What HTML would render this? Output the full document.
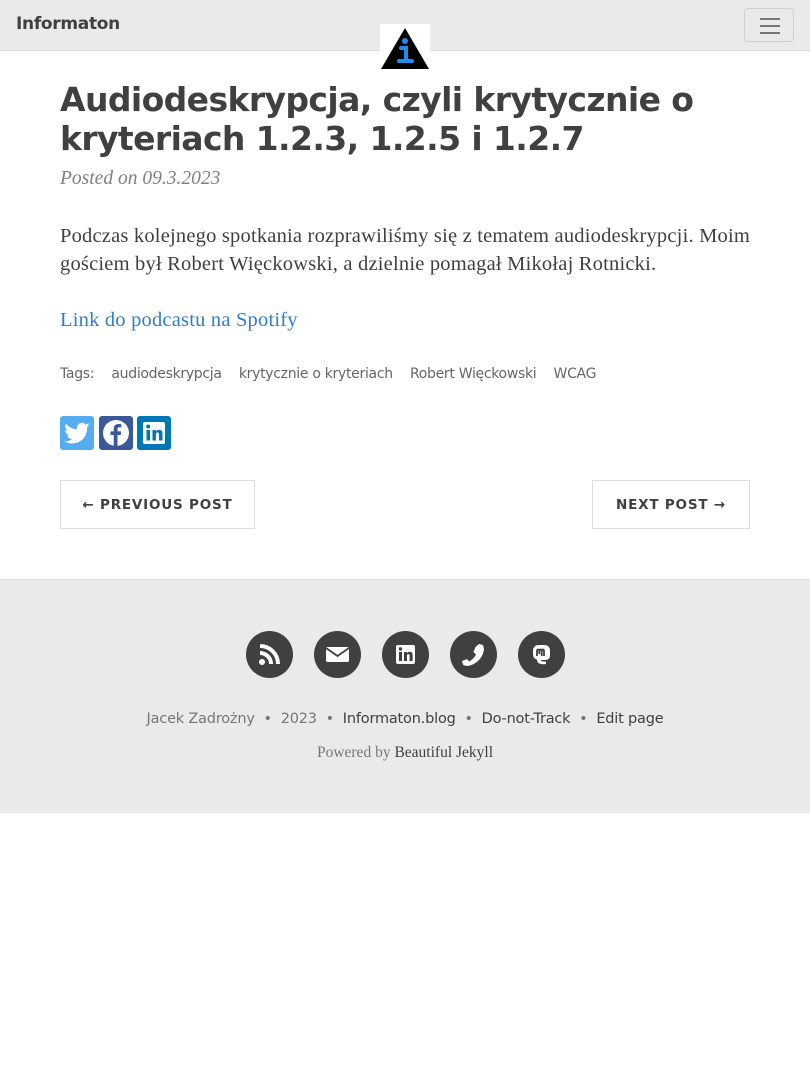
<!DOCTYPE html>
<html><head><meta charset="utf-8"><style>
*{box-sizing:border-box;margin:0;padding:0}
body{width:810px;height:1080px;background:#fff;font-family:"Liberation Sans",sans-serif;color:#404040;position:relative}
.nav{position:absolute;left:0;top:0;width:810px;height:51px;background:#eaeaea;border-bottom:1px solid #ddd}
.brand{position:absolute;left:16px;top:14px;font:bold 17px "DejaVu Sans",sans-serif;color:#404040;letter-spacing:-0.3px}
.tog{position:absolute;left:744px;top:8px;width:50px;height:34px;border:1px solid #d0d0d0;border-radius:4px}
.tog i{position:absolute;left:15px;width:20px;height:2px;background:#777}
.logo{position:absolute;left:380px;top:24px;width:50px;height:46px;background:#fff}
h1{position:absolute;left:60px;top:80px;width:700px;font:bold 33px/39px "DejaVu Sans",sans-serif;color:#404040;letter-spacing:-0.6px}
.meta{position:absolute;left:60px;top:168px;font:italic 19.5px "Liberation Serif",serif;color:#808080}
.p{position:absolute;left:60px;font:20.5px/28px "Liberation Serif",serif;color:#404040;letter-spacing:0.2px}
a{color:#2f7dd1;text-decoration:none}
.tags{position:absolute;left:60px;top:366px;font:14px "DejaVu Sans",sans-serif;color:#666;letter-spacing:-0.3px}
.tags span{margin-right:13px}
.soc{position:absolute;top:416px;width:34px;height:34px;border-radius:3px}
.btn{position:absolute;top:480px;height:49px;border:1px solid #ddd;font:bold 13.5px "DejaVu Sans",sans-serif;letter-spacing:0.8px;color:#404040;display:flex;align-items:center;justify-content:center}
.foot{position:absolute;left:0;top:579px;width:810px;height:234px;background:#eaeaea;border-top:1px solid #ddd}
.fi{position:absolute;top:631px;width:47px;height:47px;border-radius:50%;background:#404040}
.fi svg{position:absolute;left:11px;top:11px}
.fl{position:absolute;top:711px;left:0;width:810px;text-align:center;font:14.5px "DejaVu Sans",sans-serif;color:#404040;letter-spacing:-0.2px}
.fl .g{color:#777}
.pw{position:absolute;top:744px;left:0;width:810px;text-align:center;font:15.5px "Liberation Serif",serif;color:#777}
</style></head><body>
<div class="nav"><div class="brand">Informaton</div>
<div class="tog"><i style="top:9px"></i><i style="top:16px"></i><i style="top:23px"></i></div></div>
<div class="logo"><svg width="50" height="46" viewBox="0 0 50 46"><polygon points="25,4 1,45 49,45" fill="#000"/><circle cx="25" cy="17" r="3" fill="#1e8ee8"/><path d="M21 24h5v12M19 37h13" stroke="#1e8ee8" stroke-width="4" fill="none" stroke-linecap="round"/></svg></div>
<h1>Audiodeskrypcja, czyli krytycznie o kryteriach 1.2.3, 1.2.5 i 1.2.7</h1>
<div class="meta">Posted on 09.3.2023</div>
<div class="p" style="top:222px;width:720px">Podczas kolejnego spotkania rozprawiliśmy się z tematem audiodeskrypcji. Moim gościem był Robert Więckowski, a dzielnie pomagał Mikołaj Rotnicki.</div>
<div class="p" style="top:306px"><a>Link do podcastu na Spotify</a></div>
<div class="tags"><span>Tags:</span> <span>audiodeskrypcja</span> <span>krytycznie o kryteriach</span> <span>Robert Więckowski</span> <span>WCAG</span></div>
<div class="soc" style="left:60px;background:#55acee"><svg width="34" height="34" viewBox="0 0 24 24"><path fill="#fff" d="M21 6.5c-.7.3-1.4.5-2.1.6.8-.5 1.3-1.2 1.6-2-.7.4-1.5.7-2.3.9a3.7 3.7 0 0 0-6.3 3.4C8.8 9.2 6.1 7.8 4.3 5.5c-1 1.7-.5 3.8 1.1 4.9-.6 0-1.2-.2-1.7-.5 0 1.8 1.3 3.3 3 3.7-.5.1-1.1.2-1.7.1.5 1.5 1.9 2.5 3.5 2.6A7.4 7.4 0 0 1 3 17.8 10.5 10.5 0 0 0 19.1 8.5V8c.7-.5 1.4-1.1 1.9-1.5z"/></svg></div>
<div class="soc" style="left:99px;background:#3b5998"><svg width="34" height="34" viewBox="0 0 34 34"><circle cx="17" cy="17" r="13" fill="#fff"/><path d="M18.5 30V19h3.2l.5-3.6h-3.7v-2.3c0-1 .3-1.7 1.8-1.7h2v-3.2c-.4 0-1.5-.2-2.9-.2-2.8 0-4.7 1.7-4.7 4.9v2.5h-3.2V19h3.2v11z" fill="#3b5998"/></svg></div>
<div class="soc" style="left:137px;background:#0077b5"><svg width="34" height="34" viewBox="0 0 34 34"><rect x="6" y="6" width="22" height="22" rx="2" fill="#fff"/><rect x="9.5" y="14" width="3.5" height="10.5" fill="#0077b5"/><circle cx="11.2" cy="10.5" r="2" fill="#0077b5"/><path d="M15.5 14h3.3v1.5c.6-1 1.8-1.8 3.3-1.8 2.8 0 3.4 1.8 3.4 4.2v6.6h-3.5v-5.9c0-1.3-.3-2.2-1.5-2.2s-1.6.9-1.6 2.2v5.9h-3.4z" fill="#0077b5"/></svg></div>
<div class="btn" style="left:60px;width:195px">← PREVIOUS POST</div>
<div class="btn" style="left:592px;width:158px">NEXT POST →</div>
<div class="foot"></div>
<div class="fi" style="left:246px"><svg width="25" height="25" viewBox="0 0 25 25"><circle cx="5" cy="20" r="3" fill="#fff"/><path d="M3 11a11 11 0 0 1 11 11M3 4a18 18 0 0 1 18 18" stroke="#fff" stroke-width="4" fill="none"/></svg></div>
<div class="fi" style="left:314px"><svg width="25" height="25" viewBox="0 0 25 25"><rect x="1" y="5" width="23" height="15" rx="1.5" fill="#fff"/><path d="M1 6l11.5 8L24 6" stroke="#404040" stroke-width="1.8" fill="none"/></svg></div>
<div class="fi" style="left:382px"><svg width="25" height="25" viewBox="0 0 25 25"><rect x="3" y="3" width="19" height="19" rx="2" fill="#fff"/><rect x="6" y="10" width="3" height="9" fill="#404040"/><circle cx="7.5" cy="7" r="1.7" fill="#404040"/><path d="M11 10h3v1.3c.5-.9 1.5-1.5 2.8-1.5 2.3 0 2.8 1.5 2.8 3.5V19h-3v-5c0-1.1-.2-1.9-1.3-1.9S14 13 14 14v5h-3z" fill="#404040"/></svg></div>
<div class="fi" style="left:450px"><svg width="25" height="25" viewBox="0 0 25 25"><path d="M18 2l4 1 1 4c-1 9-8 16-17 17l-4-1-1-4 5-2 2 2.5c3-1.5 5.5-4 7-7L12.5 10l2-5z" fill="#fff"/></svg></div>
<div class="fi" style="left:518px"><svg width="25" height="25" viewBox="0 0 25 25"><path d="M4 9c0-4 2-6 6-6h5c4 0 6 2 6 6v4c0 4-2 5-6 5h-3c-1 0 1 2 5 1.5v2.5c-6 1-9-1-9-4.5C4 17 4 14 4 9z" fill="#fff"/><path d="M8 14V9c0-2 2.3-2 2.3 0v3M12.7 14V9c0-2 2.3-2 2.3 0v5M10.3 9c0-2 2.4-2 2.4 0" stroke="#404040" stroke-width="1.8" fill="none"/></svg></div>
<div class="fl"><span class="g">Jacek Zadrożny &nbsp;•&nbsp; 2023 &nbsp;•&nbsp;</span> Informaton.blog <span class="g">&nbsp;•&nbsp;</span> Do-not-Track <span class="g">&nbsp;•&nbsp;</span> Edit page</div>
<div class="pw">Powered by <span style="color:#404040">Beautiful Jekyll</span></div>
</body></html>
